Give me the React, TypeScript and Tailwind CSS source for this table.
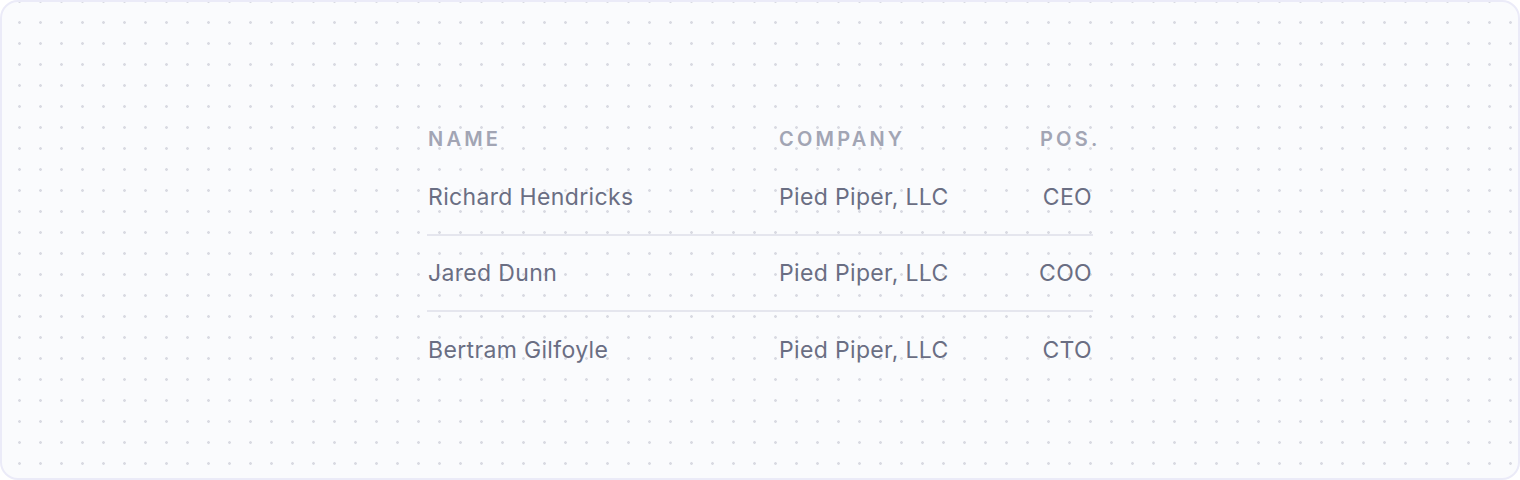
import React from 'react';

const people = [
  { name: 'Richard Hendricks', company: 'Pied Piper, LLC', pos: 'CEO' },
  { name: 'Jared Dunn', company: 'Pied Piper, LLC', pos: 'COO' },
  { name: 'Bertram Gilfoyle', company: 'Pied Piper, LLC', pos: 'CTO' },
];

const App = () => {
  return (
    <div className="w-[1520px] h-[480px] font-['Inter',sans-serif]">
      {/* card with dotted grid */}
      <div className="w-full h-full rounded-[18px] border-2 border-[#ebebf8] bg-[#fafbfd] bg-[radial-gradient(circle,#d9dae2_1px,transparent_1.7px)] bg-[size:21px_21px] bg-[position:7px_10px] flex justify-center pt-[116px]">
        <div className="w-[666px]">
          <div className="flex h-[42px] items-center text-[20px] font-semibold uppercase tracking-[0.16em] text-[#a2a5b4] whitespace-nowrap">
            <div className="w-[351px] shrink-0 pl-px">Name</div>
            <div className="w-[262px] shrink-0 pl-px">Company</div>
            <div className="flex-1">Pos.</div>
          </div>
          {people.map((p, i) => (
            <div
              key={p.name}
              className={`flex h-[76px] items-center text-[23px] tracking-[0.015em] text-[#6a6e83] whitespace-nowrap ${i < people.length - 1 ? 'border-b-2 border-[#e5e6ee]' : ''}`}
            >
              <div className="w-[351px] shrink-0 pl-px">{p.name}</div>
              <div className="w-[262px] shrink-0 pl-px">{p.company}</div>
              <div className="flex flex-1 min-w-0 justify-end pr-px">
                <span className="shrink-0">{p.pos}</span>
              </div>
            </div>
          ))}
        </div>
      </div>
    </div>
  );
};

export default App;
